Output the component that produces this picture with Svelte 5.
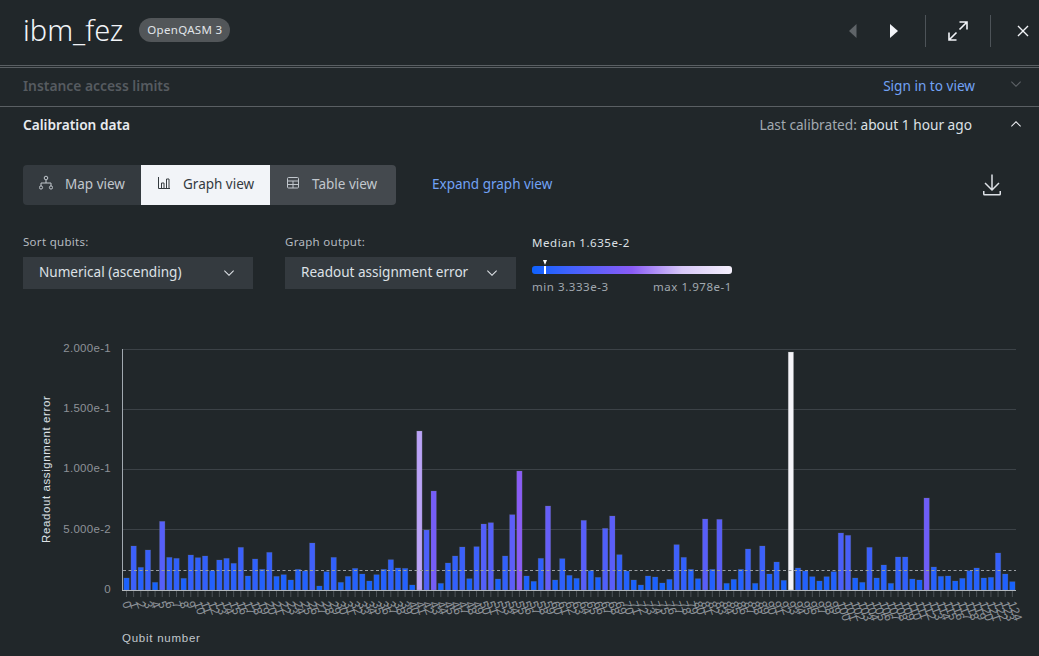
<script>
  const raw = [234,138,202,150,247,64,172,175,235,165,173,168,212,180,175,190,142,228,177,208,157,229,224,240,208,213,129,258,215,172,247,229,205,
    222,243,224,208,179,204,205,255,-207,90,-27,250,189,168,141,236,140,72,68,237,168,44,-87,228,244,175,18,240,176,226,235,61,212,232,85,48,164,213,240,255,228,231,249,238,134,172,208,236,
    57,208,58,250,238,208,147,250,138,222,186,241,-444,204,213,230,243,230,215,99,106,234,247,142,234,195,250,171,171,237,240,-6,201,229,228,243,235,212,204,234,232,159,222,245];
  const base = 590, step = 7.144, x0 = 126.5;
  const mix = (a, b, t) => a.map((v, i) => Math.round(v + (b[i] - v) * t));
  const colorOf = (h) => {
    const t = Math.min(1, h / 238);
    const c = t < 0.5
      ? mix([15, 98, 254], [138, 92, 246], t * 2)
      : mix([138, 92, 246], [244, 244, 248], Math.pow((t - 0.5) * 2, 0.7));
    return `rgb(${c.join(',')})`;
  };
  const bars = raw.map((v, i) => {
    const h = (270 - v) / 3;
    return { i, h, x: x0 + i * step, fill: colorOf(h) };
  });
  const grid = [349.5, 409.5, 469.5, 529.5];
  const yLabels = [['2.000e-1', 352], ['1.500e-1', 412], ['1.000e-1', 472], ['5.000e-2', 533], ['0', 593]];
  const chartTop = 330;
</script>

<div class="page">
  <header class="head">
    <div class="title-group">
      <h1>ibm_fez</h1>
      <span class="chip">OpenQASM 3</span>
    </div>
    <div class="actions">
      <svg width="16" height="16" viewBox="0 0 16 16"><path d="M11.500 1 4 8l7.500 7z" fill="#5f6468" /></svg>
      <svg class="next" width="16" height="16" viewBox="0 0 16 16"><path d="M4 1l8 7-8 7z" fill="#f2f4f8" /></svg>
      <span class="vr v1"></span>
      <svg class="expand" width="24" height="24" viewBox="0 0 24 24" fill="none" stroke="#f2f4f8" stroke-width="1.6"><path d="M3 21 10.500 13.500M3 13.500V21H10.500M13.500 10.500 21 3M13.500 3H21V10.500" /></svg>
      <span class="vr v2"></span>
      <svg class="close" width="22" height="22" viewBox="0 0 32 32"><path fill="#f2f4f8" d="M24 9.400 22.600 8 16 14.600 9.400 8 8 9.400 14.600 16 8 22.600 9.400 24 16 17.400 22.600 24 24 22.600 17.400 16z" /></svg>
    </div>
  </header>

  <section class="row limits">
    <span class="row-title muted">Instance access limits</span>
    <div class="row-right">
      <a class="link" href="#top">Sign in to view</a>
      <svg class="chev" width="16" height="16" viewBox="0 0 16 16"><path fill="#5f6468" d="M8 11 3 6l.7-.7L8 9.600l4.300-4.300.7.7z" /></svg>
    </div>
  </section>

  <section class="row calib">
    <span class="row-title">Calibration data</span>
    <div class="row-right">
      <span class="stamp">Last calibrated: <b>about 1 hour ago</b></span>
      <svg class="chev" width="16" height="16" viewBox="0 0 16 16"><path fill="#f2f4f8" d="M8 5l5 5-.7.7L8 6.400 3.700 10.700 3 10z" /></svg>
    </div>
  </section>

  <div class="toolbar">
    <div class="tabs">
      <button class="tab t1">
        <svg width="14" height="16" viewBox="0 0 14 16" fill="none" stroke="#c1c7cd"><circle cx="7" cy="3" r="1.800" /><circle cx="2" cy="12.500" r="1.600" /><circle cx="12" cy="12.500" r="1.600" /><path d="M7 5v3M2 11V8h10v3" /></svg>
        Map view
      </button>
      <button class="tab t2">
        <svg width="14" height="14" viewBox="0 0 14 14" fill="none" stroke="#343a3f"><path d="M1.500 1v11.500H13M4.500 12V7h2.500v5M9.500 12V3H12v9" /></svg>
        Graph view
      </button>
      <button class="tab t3">
        <svg width="14" height="14" viewBox="0 0 14 14" fill="none" stroke="#c1c7cd"><rect x="1.500" y="1.500" width="11" height="10.500" rx="1" /><path d="M1.500 5h11M1.500 8.500h11M7 5v7" /></svg>
        Table view
      </button>
    </div>
    <a class="link expand-link" href="#top">Expand graph view</a>
    <svg class="download" width="24" height="24" viewBox="0 0 16 16"><path fill="#dde1e6" d="M13 12v2H3v-2H2v2a1 1 0 0 0 1 1h10a1 1 0 0 0 1-1v-2zM13 7l-.7-.7-3.800 3.800V1h-1v9.100L3.700 6.300 3 7l5 5z" /></svg>
  </div>

  <div class="filters">
    <div class="field f1">
      <span class="label">Sort qubits:</span>
      <div class="select">
        <span>Numerical (ascending)</span>
        <svg width="16" height="16" viewBox="0 0 16 16"><path fill="#dde1e6" d="M8 11 3 6l.7-.7L8 9.600l4.300-4.300.7.7z" /></svg>
      </div>
    </div>
    <div class="field f2">
      <span class="label">Graph output:</span>
      <div class="select">
        <span>Readout assignment error</span>
        <svg width="16" height="16" viewBox="0 0 16 16"><path fill="#dde1e6" d="M8 11 3 6l.7-.7L8 9.600l4.300-4.300.7.7z" /></svg>
      </div>
    </div>
    <div class="legend">
      <span class="median">Median 1.635e-2</span>
      <div class="scale">
        <span class="pin"></span>
        <span class="tri"></span>
      </div>
      <div class="ends"><span>min 3.333e-3</span><span>max 1.978e-1</span></div>
    </div>
  </div>

  <svg class="chart" width="1039" height="326" viewBox="0 {chartTop} 1039 326" role="img" aria-label="Readout assignment error by qubit">
    {#each grid as y}
      <line x1="123" x2="1016" y1={y} y2={y} stroke="#3c4247" />
    {/each}
    {#each yLabels as [t, y]}
      <text class="ytick" x="111" {y} text-anchor="end">{t}</text>
    {/each}
    <text class="ytitle" transform="translate(50 543) rotate(-90)">Readout assignment error</text>
    {#each bars as b}
      <rect x={b.x - 2.7} y={base - b.h} width="5.4" height={b.h} fill={b.fill} stroke="rgba(110,115,120,0.3)" stroke-width="0.8" />
      <line x1={b.x} x2={b.x} y1="591" y2="597" stroke="#4d5358" />
      <text class="xtick" transform="translate({b.x - 4.5} 603) rotate(70)">{b.i}</text>
    {/each}
    <line x1="123" x2="1016" y1="570.5" y2="570.5" stroke="#9a9ea3" stroke-dasharray="3 2.5" />
    <line x1="122.5" x2="122.5" y1="349" y2="590" stroke="#a2a9b0" />
    <line x1="122" x2="1016" y1="590.5" y2="590.5" stroke="#b4b9be" />
    <text class="xtitle" x="122" y="642">Qubit number</text>
  </svg>
</div>

<style>
  :global(body) {
    margin: 0;
    background: #21272a;
  }
  .page {
    width: 1039px;
    height: 656px;
    overflow: hidden;
    background: #21272a;
    color: #dde1e6;
    font-family: "Noto Sans", "Liberation Sans", sans-serif;
    font-size: 14px;
  }
  .head {
    height: 66px;
    box-sizing: border-box;
    padding: 0 5px 5px 23px;
    display: flex;
    align-items: center;
    justify-content: space-between;
    border-bottom: 1px solid #5a5f63;
  }
  .title-group {
    display: flex;
    align-items: center;
    gap: 16px;
  }
  h1 {
    margin: 0;
    font-size: 29px;
    font-weight: 300;
    line-height: 36px;
    color: #f2f4f8;
  }
  .chip {
    height: 24px;
    line-height: 24px;
    padding: 0 8px;
    border-radius: 12px;
    background: #525659;
    font-size: 11.5px;
    letter-spacing: 0.3px;
    color: #e0e4e8;
  }
  .actions {
    display: flex;
    align-items: center;
    height: 32px;
    margin-top: 2px;
  }
  .next { margin-left: 25px; }
  .vr {
    width: 1px;
    height: 32px;
    background: #4d5358;
  }
  .v1 { margin-left: 23px; }
  .expand { margin-left: 20px; }
  .v2 { margin-left: 20px; }
  .close { margin-left: 21px; }
  .row {
    display: flex;
    align-items: center;
    justify-content: space-between;
    padding: 0 15px 0 23px;
    box-sizing: border-box;
  }
  .limits {
    height: 40px;
    margin-top: 1px;
    padding-bottom: 4px;
    border-top: 1px solid #5a5f63;
    border-bottom: 1px solid #5a5f63;
  }
  .calib { height: 37px; padding-bottom: 2px; }
  .row-title {
    font-weight: 600;
    font-size: 13.7px;
    color: #e8ebef;
  }
  .row-title.muted { color: #565b60; font-size: 13.85px; }
  .row-right {
    display: flex;
    align-items: center;
    gap: 36px;
  }
  .limits .row-right { gap: 33px; }
  .link {
    color: #72a2f5;
    text-decoration: none;
    font-size: 13.6px;
  }
  .stamp { color: #a2a9b0; font-size: 13.7px; }
  .stamp b { font-weight: 400; color: #dde1e6; }
  .chev { margin-top: -2px; }
  .toolbar {
    display: flex;
    align-items: center;
    margin-top: 21px;
    height: 40px;
    padding: 0 35px 0 23px;
  }
  .tabs {
    display: grid;
    grid-template-columns: 118px 129px 126px;
    height: 40px;
    border-radius: 4px;
    overflow: hidden;
  }
  .tab {
    display: flex;
    align-items: center;
    gap: 12px;
    border: 0;
    padding: 0 0 3px 16px;
    font: inherit;
    font-size: 13.5px;
    color: #c1c7cd;
    background: #343a3f;
  }
  .tab svg { margin-top: -1px; }
  .t2 { background: #f2f4f8; color: #343a3f; }
  .t3 { background: #44494e; }
  .expand-link { margin-left: 36px; padding-bottom: 3px; font-size: 13.5px; }
  .download { margin-left: auto; }
  .filters {
    display: flex;
    margin-top: 29px;
    height: 96px;
  }
  .field {
    display: flex;
    flex-direction: column;
  }
  .f1 { width: 230px; margin-left: 23px; }
  .f2 { width: 231px; margin-left: 32px; }
  .label {
    font-size: 11.5px;
    line-height: 16px;
    letter-spacing: 0.3px;
    color: #b5bac0;
    margin-bottom: 7px;
  }
  .select {
    height: 32px;
    background: #343a3f;
    display: flex;
    align-items: center;
    justify-content: space-between;
    padding: 0 16px;
    box-sizing: border-box;
    color: #dde1e6;
    font-size: 13.55px;
  }
  .select span { padding-bottom: 3px; }
  .legend {
    margin-left: 16px;
    width: 200px;
    display: flex;
    flex-direction: column;
    font-size: 11.5px;
    letter-spacing: 0.55px;
  }
  .median { line-height: 16px; color: #dde1e6; margin-top: 1px; }
  .scale {
    position: relative;
    height: 8px;
    margin-top: 15px;
    border-radius: 3px;
    background: linear-gradient(90deg, #0f62fe 0%, #3f62fe 18%, #8a5cf6 50%, #d8c8f8 75%, #f4f0fc 100%);
  }
  .pin {
    position: absolute;
    left: 12px;
    top: 0;
    width: 2px;
    height: 8px;
    background: #fff;
  }
  .tri {
    position: absolute;
    left: 10.5px;
    top: -6px;
    border-left: 2.5px solid transparent;
    border-right: 2.5px solid transparent;
    border-top: 5px solid #fff;
  }
  .ends {
    display: flex;
    justify-content: space-between;
    margin-top: 5px;
    line-height: 16px;
    color: #a2a9b0;
  }
  .chart {
    display: block;
  }
  .ytick {
    font-family: "Liberation Sans", sans-serif;
    font-size: 11.5px;
    letter-spacing: 0.3px;
    fill: #8d9298;
  }
  .ytitle {
    font-family: "Liberation Sans", sans-serif;
    font-size: 11.5px;
    letter-spacing: 0.6px;
    fill: #dde1e6;
  }
  .xtick {
    font-family: "Liberation Sans", sans-serif;
    font-size: 12px;
    fill: #8d9298;
  }
  .xtitle {
    font-family: "Liberation Sans", sans-serif;
    font-size: 11.5px;
    letter-spacing: 0.75px;
    fill: #c1c7cd;
  }
</style>
